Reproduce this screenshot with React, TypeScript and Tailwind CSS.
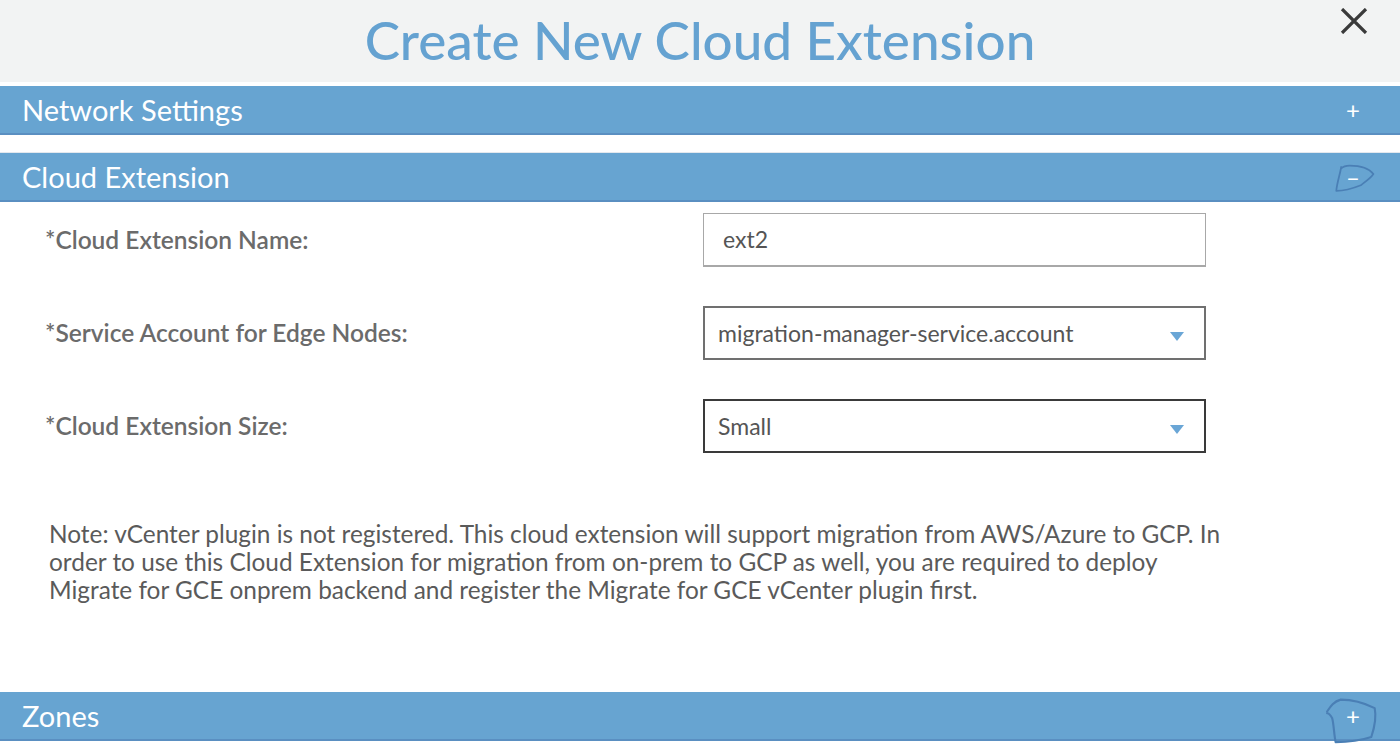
import React from 'react';

const font = { fontFamily: 'Lato, "Noto Sans", "Liberation Sans", sans-serif' };

// hand-drawn annotation loops around the toggle icons
const Scribble: React.FC<{ d: string; className: string }> = ({ d, className }) => (
  <svg className={`pointer-events-none absolute ${className}`} viewBox="0 0 80 60" fill="none">
    <path d={d} stroke="#4a7fb5" strokeWidth="2.5" strokeLinecap="round" strokeLinejoin="round" />
  </svg>
);

const SectionBar: React.FC<{ title: string; sign: string; children?: React.ReactNode }> = ({ title, sign, children }) => (
  <div className="relative flex h-[49px] items-center justify-between border-b-2 border-[#5a8fc1] bg-[#67a4d1] pl-[22px] pr-[40px]">
    <span className="text-[29px] leading-none text-white">{title}</span>
    <span className="text-[24px] leading-none text-white">{sign}</span>
    {children}
  </div>
);

const Caret = () => (
  <svg width="14" height="9" viewBox="0 0 14 9" className="mt-[6px]">
    <path d="M0 0 L14 0 L7 9 Z" fill="#6aa6d6" />
  </svg>
);

const Row: React.FC<{ label: string; children: React.ReactNode }> = ({ label, children }) => (
  <div className="flex h-[54px] items-center">
    <div className="w-[703px] pl-[45px] text-[24.5px] font-semibold text-[#6b6b6b]">{label}</div>
    {children}
  </div>
);

export default function App() {
  return (
    <div className="h-[748px] w-[1400px] overflow-hidden bg-white" style={font}>
      <div className="relative flex h-[82px] items-center justify-center bg-[#f2f3f3]">
        <h1 className="-mt-[4px] text-[53px] font-medium leading-none text-[#65a2d1]">Create New Cloud Extension</h1>
        <svg className="absolute right-[32px] top-[8px]" width="28" height="26" viewBox="0 0 28 26">
          <path d="M2 1 L26 25 M26 1 L2 25" stroke="#3a3a3a" strokeWidth="3.2" />
        </svg>
      </div>
      <div className="h-[4px]" />

      <SectionBar title="Network Settings" sign="+" />
      <div className="h-[18px] border-b border-[#e3e8ee]" />
      <SectionBar title="Cloud Extension" sign="–">
        <Scribble
          className="right-[14px] top-[6px] h-[44px] w-[56px]"
          d="M16 10 C14 22 10 32 9 44 C20 44 34 40 44 36 C52 30 58 26 62 20 C56 12 42 8 28 8 C22 8 18 10 16 12"
        />
      </SectionBar>

      <div className="flex flex-col gap-[39px] pt-[11px]">
        <Row label="*Cloud Extension Name:">
          <div className="flex h-[54px] w-[503px] items-center border border-[#a8a8a8] border-b-2 pl-[19px] text-[23px] text-[#555]">
            ext2
          </div>
        </Row>
        <Row label="*Service Account for Edge Nodes:">
          <div className="flex h-[54px] w-[503px] items-center justify-between border-2 border-[#707070] pl-[13px] pr-[20px] text-[23px] text-[#555]">
            <span>migration-manager-service.account</span>
            <Caret />
          </div>
        </Row>
        <Row label="*Cloud Extension Size:">
          <div className="flex h-[54px] w-[503px] items-center justify-between border-2 border-[#3a3a3a] pl-[13px] pr-[20px] text-[23px] text-[#555]">
            <span>Small</span>
            <Caret />
          </div>
        </Row>
      </div>

      <p className="whitespace-nowrap pl-[49px] pt-[67px] text-[24.4px] leading-[28px] text-[#5a5a5a]">
        Note: vCenter plugin is not registered. This cloud extension will support migration from AWS/Azure to GCP. In
        <br />
        order to use this Cloud Extension for migration from on-prem to GCP as well, you are required to deploy
        <br />
        Migrate for GCE onprem backend and register the Migrate for GCE vCenter plugin first.
      </p>

      <div className="h-[88px]" />
      <SectionBar title="Zones" sign="+">
        <Scribble
          className="right-[10px] top-[2px] h-[52px] w-[68px]"
          d="M6 20 C10 14 14 8 22 6 C34 6 50 10 62 16 C64 26 62 38 58 50 C46 54 30 56 16 56 C14 46 14 36 12 28 C10 24 8 22 6 22"
        />
      </SectionBar>
    </div>
  );
}
